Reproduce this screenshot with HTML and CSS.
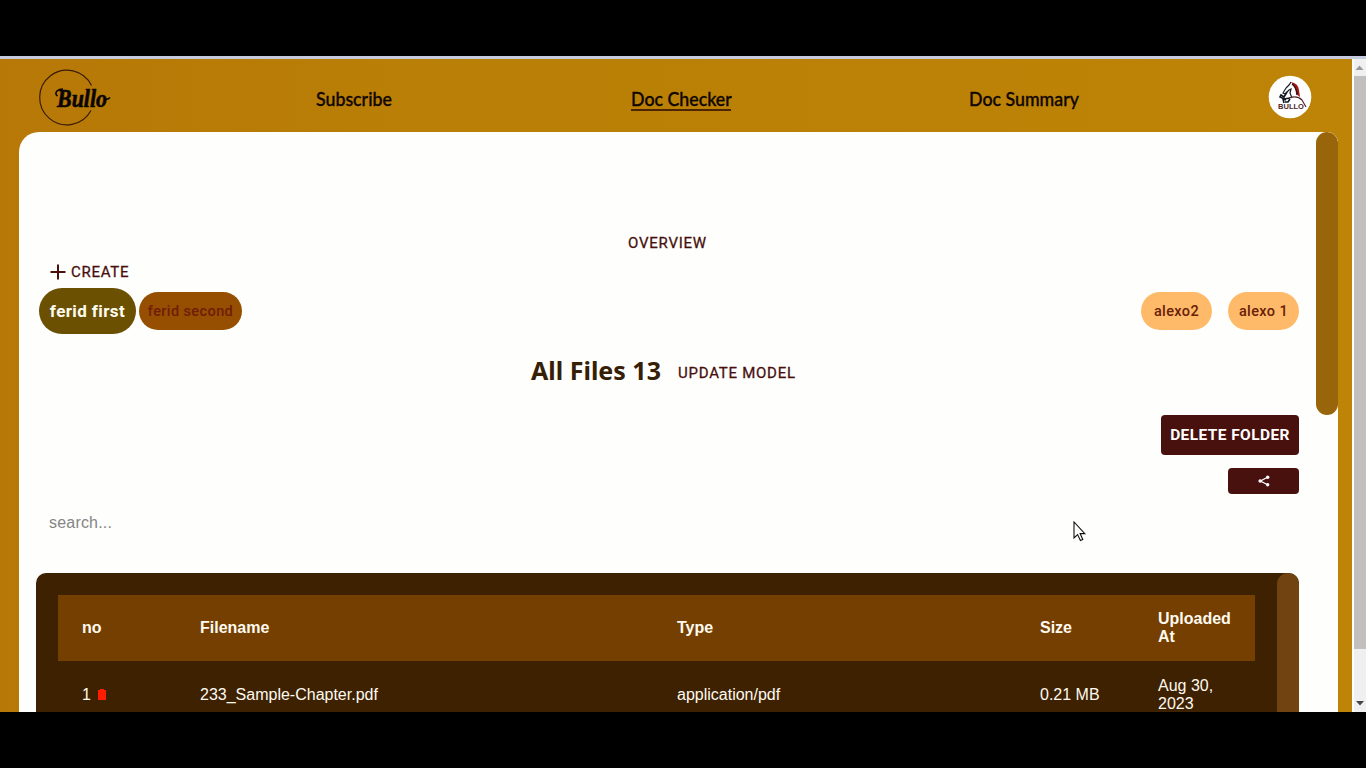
FILE: index.html
```html
<!DOCTYPE html>
<html lang="en">
<head>
<meta charset="utf-8">
<title>Bullo - Doc Checker</title>
<link rel="stylesheet" href="styles.css">
</head>
<body>
<div class="screen">
  <div class="app">
    <header class="topbar">
      <svg class="logo" width="74" height="58" viewBox="0 0 74 58">
        <path d="M53.500 16.500A27.300 27.300 0 1 0 53 41.500" fill="none" stroke="#3a1c08" stroke-width="1.200"/>
        <text class="logo-text" x="19" y="37.500" textLength="50" lengthAdjust="spacingAndGlyphs">Bullo</text>
        <path d="M19.500 27q-3-2-.500-5 2-2 6-2M67 30q3 1 5-1.500" fill="none" stroke="#0b0603" stroke-width="1.600"/>
      </svg>
      <nav class="nav">
        <a class="nav-link"><span>Subscribe</span></a>
        <a class="nav-link nav-active"><span>Doc Checker</span></a>
        <a class="nav-link nav-last"><span>Doc Summary</span></a>
      </nav>
      <svg class="avatar" width="44" height="44" viewBox="0 0 44 44">
        <circle cx="22" cy="22" r="21.300" fill="#fff"/>
        <path d="M23 7l-2 3-3 3-3 5 2 1 4-4 2-1-1 4 2 5" fill="none" stroke="#161b22" stroke-width="1.200"/>
        <path d="M19 17l-3 5-3-2-1 2 4 2 6-1M18 25l-3-1 1 4M22 24l-2 3h-3" fill="none" stroke="#111820" stroke-width="1.600"/>
        <path d="M23 7q7 1 8 8l1 7-4-3q0-6-5-12z" fill="#a51718"/>
        <path d="M24 9q5 4 5 11" fill="none" stroke="#2a1013" stroke-width="1.200"/>
        <path d="M21 23q8-3 13 2l4 7" fill="none" stroke="#56262b" stroke-width="1.200"/>
        <text class="avatar-text" x="10" y="33.500" textLength="26" lengthAdjust="spacingAndGlyphs">BULLO</text>
      </svg>
    </header>
    <main class="panel">
      <div class="content">
        <button class="text-button overview">OVERVIEW</button>
        <button class="text-button create">
          <svg width="16" height="16" viewBox="0 0 16 16"><path d="M8 .5v15M.5 8h15" stroke="#48100d" stroke-width="2"/></svg><span>CREATE</span>
        </button>
        <div class="folders">
          <button class="pill pill-current">ferid first</button>
          <button class="pill pill-second">ferid second</button>
          <button class="pill pill-shared pill-push">alexo2</button>
          <button class="pill pill-shared">alexo 1</button>
        </div>
        <div class="heading">
          <h1 class="title">All Files 13</h1>
          <button class="text-button update">UPDATE MODEL</button>
        </div>
        <div class="actions">
          <button class="solid delete">DELETE FOLDER</button>
          <button class="solid share" aria-label="Share">
            <svg width="12" height="12" viewBox="0 0 12 12"><path d="M9.500 2.200L2.500 6l7 3.800" fill="none" stroke="#fff" stroke-width="1.300"/><g fill="#fff"><circle cx="9.700" cy="2.200" r="1.700"/><circle cx="2.200" cy="6" r="1.800"/><circle cx="9.700" cy="9.800" r="1.700"/></g></svg>
          </button>
        </div>
        <input class="search" placeholder="search...">
        <section class="files">
          <div class="table">
            <div class="row head">
              <div>no</div><div>Filename</div><div>Type</div><div>Size</div><div>Uploaded At</div>
            </div>
            <div class="row">
              <div class="number">1 <svg class="trash" width="8" height="11" viewBox="0 0 8 11"><path d="M0 1h2V0h4v1h2v10H0z" fill="#ff1d00"/></svg></div><div>233_Sample-Chapter.pdf</div><div>application/pdf</div><div>0.21 MB</div><div>Aug 30, 2023</div>
            </div>
          </div>
          <div class="files-thumb"></div>
        </section>
      </div>
      <div class="panel-track"><div class="panel-thumb"></div></div>
    </main>
  </div>
  <div class="scrollbar">
    <svg width="14" height="17" viewBox="0 0 14 17"><path d="M3.500 11L7.500 6.500l4 4.500z" fill="#999"/></svg>
    <div class="scroll-thumb"></div>
    <svg class="scroll-down" width="14" height="17" viewBox="0 0 14 17"><path d="M4 6h8l-4 4.500z" fill="#444"/></svg>
  </div>
  <svg class="cursor" width="14" height="21" viewBox="0 0 14 21"><path d="M1 1v16l3.600-3.400 2.800 5.900 2.400-1.100-2.700-5.800h4.700z" fill="#fff" stroke="#111" stroke-width="1.100"/></svg>
</div>
</body>
</html>
```
FILE: styles.css
```css
* { box-sizing: border-box; }
body { margin: 0; background: #000; padding: 56px 0; font-family: "Liberation Sans", Arial, sans-serif; }
button { border: 0; background: none; padding: 0; font-family: Roboto, sans-serif; color: #48100d; white-space: nowrap; }
.screen { position: relative; display: flex; height: 656px; overflow: hidden; border-top: 3px solid #c5cbdc; }
.app { width: 1352px; display: flex; flex-direction: column; background: linear-gradient(90deg, #b77807 0, #b97f06 30%, #bd8407 100%); }

.topbar { height: 73px; flex: none; display: flex; align-items: center; padding: 3px 40px 0 38px; }
.logo { overflow: visible; margin-top: 1px; }
.logo-text { font: italic 700 26px "Liberation Serif", serif; fill: #0b0603; stroke: #0b0603; stroke-width: .6px; }
.nav { display: flex; gap: 238px; margin-left: 204px; }
.nav-link { width: 77px; height: 24px; font: 500 19px/23px Lato, sans-serif; color: #100600; -webkit-text-stroke: .35px #100600; white-space: nowrap; margin-top: 4px; }
.nav-link span { display: inline-block; transform: scaleX(.935); transform-origin: 0 0; }
.nav-active { width: 100px; border-bottom: 2px solid #4d2504; }
.nav-last { width: 110px; }
.avatar { margin-left: auto; }
.avatar-text { font: 700 7.5px "Liberation Sans", sans-serif; fill: #50262a; }

.panel { flex: 1; min-height: 0; display: flex; margin: 0 14px 0 19px; background: #fefefd; border-radius: 20px 11px 0 0; overflow: hidden; }
.content { width: 1297px; padding: 98px 17px 0; display: flex; flex-direction: column; flex: none; }
.content > * { flex: none; }
.panel-track { width: 22px; }
.panel-thumb { height: 283px; border-radius: 11px; background: #99650b; }

.text-button { font-size: 15px; font-weight: 400; line-height: 26px; letter-spacing: .75px; -webkit-text-stroke: .3px #48100d; }
.overview { align-self: center; }
.create { align-self: flex-start; display: flex; align-items: center; gap: 5px; height: 26px; margin: 3px 0 0 14px; }
.folders { height: 46px; display: flex; align-items: center; margin: 3px 0 0 3px; }
.pill { height: 38px; border-radius: 19px; font-size: 14.5px; font-weight: 500; letter-spacing: .4px; }
.pill-current { width: 97px; height: 46px; border-radius: 23px; background: #6b5001; color: #fffdf0; font-size: 17px; font-weight: 700; letter-spacing: .4px; }
.pill-second { width: 103px; margin-left: 3px; background: #964e01; color: #701d09; }
.pill-shared { width: 71px; background: #ffba69; color: #682007; }
.pill-push { margin-left: auto; margin-right: 16px; }
.heading { display: flex; align-items: center; height: 36px; margin: 20px 0 0 495px; }
.title { margin: -4px 0 0; width: 130px; font: 700 25px/36px "Noto Sans", sans-serif; color: #352006; white-space: nowrap; }
.update { margin: 2px 0 0 17px; }
.actions { display: flex; flex-direction: column; align-items: flex-end; gap: 13px; margin-top: 25px; }
.solid { background: #48110e; color: #fff; border-radius: 4px; }
.delete { width: 138px; height: 40px; font-size: 15.5px; font-weight: 700; letter-spacing: .4px; }
.share { width: 71px; height: 26px; display: flex; align-items: center; justify-content: center; }
.search { margin: 14px 0 0 3px; width: 300px; height: 30px; padding: 0 10px; border: 0; background: transparent; font: 16px "Liberation Sans", sans-serif; letter-spacing: .2px; }
.search::placeholder { color: #858585; }

.files { margin-top: 35px; height: 400px; display: flex; justify-content: space-between; background: #3d2101; border-radius: 10px; overflow: hidden; }
.table { width: 1197px; margin: 22px 0 0 22px; color: #fffaf0; font-size: 16px; line-height: 18px; }
.row { display: grid; grid-template-columns: 118px 477px 363px 118px 121px; height: 67px; align-items: center; }
.row > div { padding: 0 24px; }
.head { background: #743f00; font-weight: 700; height: 66px; }
.trash { margin-left: 3px; }
.files-thumb { width: 22px; border-radius: 11px; background: #704310; }

.scrollbar { width: 14px; display: flex; flex-direction: column; background: #f1f0f0; border-left: 2px solid #fff; }
.scrollbar svg { flex: none; display: block; margin-left: -2px; }
.scroll-thumb { height: 573px; flex: none; background: #c1c0bf; }
.scroll-down { margin-top: auto !important; }
.cursor { position: absolute; left: 1073px; top: 462px; }
```
